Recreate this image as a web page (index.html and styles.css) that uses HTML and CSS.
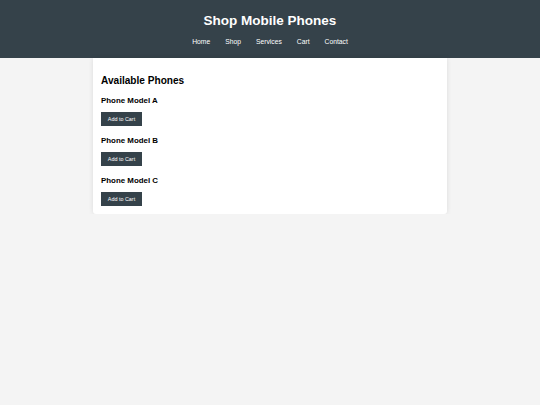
FILE: index.html
```html
<!DOCTYPE html>
<html lang="en">
<head>
<meta charset="utf-8">
<title>Shop Mobile Phones</title>
<link rel="stylesheet" href="styles.css">
</head>
<body>
<header class="site-header">
  <h1 class="site-title">Shop Mobile Phones</h1>
  <nav class="nav">
    <a href="#">Home</a>
    <a href="#">Shop</a>
    <a href="#">Services</a>
    <a href="#">Cart</a>
    <a href="#">Contact</a>
  </nav>
</header>
<main class="card">
  <h2 class="card-title">Available Phones</h2>
  <div class="product">
    <h3 class="product-name">Phone Model A</h3>
    <button class="btn">Add to Cart</button>
  </div>
  <div class="product">
    <h3 class="product-name">Phone Model B</h3>
    <button class="btn">Add to Cart</button>
  </div>
  <div class="product">
    <h3 class="product-name">Phone Model C</h3>
    <button class="btn">Add to Cart</button>
  </div>
</main>
</body>
</html>
```
FILE: styles.css
```css
html, body {
  margin: 0;
  padding: 0;
}
body {
  background: #f4f4f4;
  font-family: "Liberation Sans", Arial, sans-serif;
  color: #000;
  font-size: 6.75px;
}
.site-header {
  background: #35424a;
  color: #fff;
  text-align: center;
  padding: 13px 0 12px;
}
.site-title {
  margin: 0;
  font-size: 13.5px;
  line-height: 16px;
  font-weight: bold;
}
.nav {
  margin-top: 9px;
  display: flex;
  justify-content: center;
  gap: 15px;
  line-height: 8px;
}
.nav a {
  color: #fff;
  text-decoration: none;
  font-size: 6.75px;
}
.card {
  display: block;
  width: 338px;
  margin: 0 auto;
  background: #fff;
  padding: 17px 8px 8px;
  box-shadow: 0 0 5px rgba(0, 0, 0, 0.1);
  border-radius: 0 0 3px 3px;
}
.card-title {
  margin: 0 0 9px;
  font-size: 10.1px;
  line-height: 12px;
  font-weight: bold;
}
.product + .product {
  margin-top: 10px;
}
.product-name {
  margin: 0;
  font-size: 7.9px;
  line-height: 9px;
  font-weight: bold;
}
.btn {
  display: block;
  margin-top: 7px;
  width: 41px;
  height: 14px;
  padding: 0;
  border: none;
  background: #35424a;
  color: #fff;
  font-family: "Liberation Sans", Arial, sans-serif;
  font-size: 5.4px;
  text-align: center;
  cursor: pointer;
}
```
